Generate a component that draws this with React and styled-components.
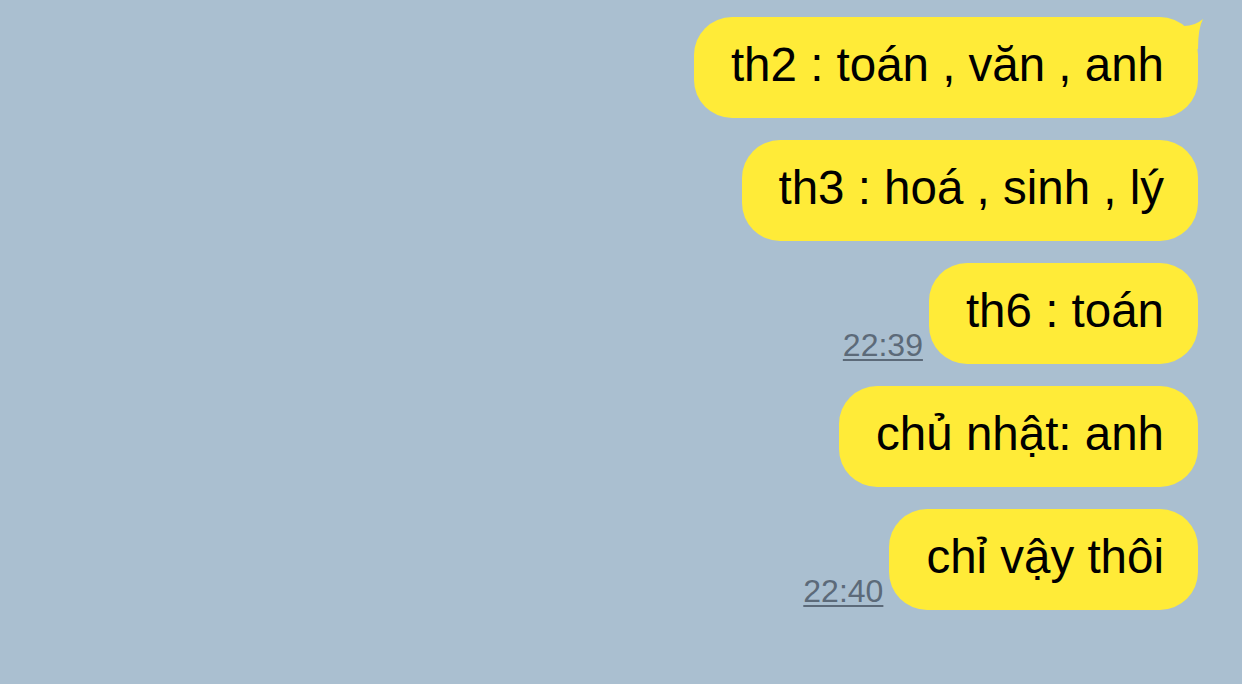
import styled, { createGlobalStyle } from "styled-components";

const messages = [
  { text: "th2 : toán , văn , anh", tail: true },
  { text: "th3 : hoá , sinh , lý" },
  { text: "th6 : toán", time: "22:39" },
  { text: "chủ nhật: anh" },
  { text: "chỉ vậy thôi", time: "22:40" },
];

function App() {
  return (
    <>
      <GlobalStyle />
      <ChatPane>
        {messages.map((m) => (
          <Row key={m.text}>
            {m.time && <Time>{m.time}</Time>}
            <Bubble>
              {m.tail && (
                <Tail viewBox="0 0 20 32" width="20" height="32">
                  <path d="M0 9 Q11 9 19 2 Q14 11 14 32 L0 32 Z" fill="#ffeb38" />
                </Tail>
              )}
              {m.text}
            </Bubble>
          </Row>
        ))}
      </ChatPane>
    </>
  );
}

const GlobalStyle = createGlobalStyle`
  html, body {
    margin: 0;
    padding: 0;
    background: #aabfd0;
  }
`;

const ChatPane = styled.div`
  width: 1242px;
  height: 684px;
  box-sizing: border-box;
  padding: 17px 44px 0 0;
  display: flex;
  flex-direction: column;
  align-items: flex-end;
  gap: 22px;
  background: #aabfd0;
  font-family: "Liberation Sans", Arial, sans-serif;
`;

const Row = styled.div`
  display: flex;
  align-items: flex-end;
  gap: 6px;
`;

const Time = styled.span`
  font-size: 32px;
  line-height: 30px;
  color: #5c6a79;
  text-decoration: underline;
  text-decoration-thickness: 2px;
  text-underline-offset: 3px;
  margin-bottom: 4px;
`;

const Bubble = styled.div`
  position: relative;
  height: 101px;
  box-sizing: border-box;
  padding: 0 34px 6px 37px;
  display: flex;
  align-items: center;
  background: #ffeb38;
  border-radius: 38px;
  color: #000;
  font-size: 47.5px;
  white-space: nowrap;
`;

const Tail = styled.svg`
  position: absolute;
  top: 0;
  right: -6px;
`;

export default App;
